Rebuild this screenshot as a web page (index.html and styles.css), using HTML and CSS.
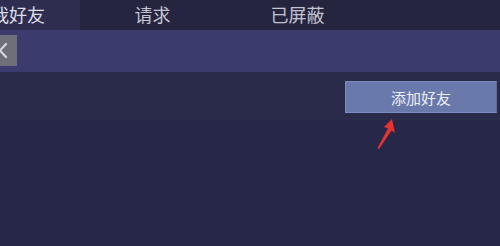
FILE: index.html
```html
<!DOCTYPE html>
<html lang="zh">
<head>
<meta charset="utf-8">
<link rel="stylesheet" href="styles.css">
</head>
<body>
<div class="screen">
  <div class="tabs">
    <div class="tab tab-active"><span class="tab-clip">我好友</span></div>
    <div class="tab">请求</div>
    <div class="tab">已屏蔽</div>
    <div class="tab-rest"></div>
  </div>
  <div class="band">
    <div class="close">
      <svg width="17" height="31" viewBox="0 0 17 31"><path d="M-6 9 L6 22 M6 9 L-6 22" stroke="#d6d6dc" stroke-width="2.2" fill="none" stroke-linecap="round"/></svg>
    </div>
  </div>
  <div class="content">
    <div class="toolbar">
      <button class="add-btn">添加好友</button>
    </div>
    <svg class="arrow" width="30" height="36" viewBox="0 0 30 36"><polygon points="17,0 20,14 16.5,11.5 4,30 2.5,29 13,9.5 9,8" fill="#e8322f"/></svg>
  </div>
</div>
</body>
</html>
```
FILE: styles.css
```css
* { box-sizing: border-box; }
html, body { margin: 0; padding: 0; }
body {
  width: 500px;
  height: 246px;
  overflow: hidden;
  background: #28284a;
  font-family: "Noto Sans CJK SC", "Noto Sans", sans-serif;
}
.screen {
  position: relative;
  width: 500px;
  height: 246px;
  display: flex;
  flex-direction: column;
}
.tabs {
  display: flex;
  height: 30px;
  background: #262540;
}
.tab {
  width: 145px;
  display: flex;
  align-items: center;
  justify-content: center;
  font-size: 18px;
  line-height: 26px;
  color: #c4c4d0;
  padding-bottom: 3px;
}
.tab-active {
  width: 80px;
  justify-content: flex-start;
  overflow: hidden;
  background: #2e2d4f;
  color: #dedee8;
}
.tab-clip {
  margin-left: -9px;
  white-space: nowrap;
}
.tab-rest { flex: 1; }
.band {
  height: 43px;
  background: #3c3b6e;
  border-bottom: 1px solid #28284a;
  display: flex;
  align-items: flex-start;
  padding-top: 5px;
}
.close {
  width: 17px;
  height: 31px;
  background: #6f6f79;
  display: flex;
}
.content {
  position: relative;
  flex: 1;
  background: linear-gradient(#2a2a4b 0, #2a2a4b 47px, #27274a 47px);
}
.toolbar {
  display: flex;
  justify-content: flex-end;
  padding: 8px 3px 0 0;
}
.add-btn {
  width: 152px;
  height: 32px;
  border: 1px solid #7d8cc0;
  border-right-color: #5e6c9c;
  background: #6a79ab;
  color: #eceff7;
  font-family: "Noto Sans CJK SC", "Noto Sans", sans-serif;
  font-size: 15px;
  padding: 0;
}
.arrow {
  position: absolute;
  left: 375px;
  top: 46px;
}
```
